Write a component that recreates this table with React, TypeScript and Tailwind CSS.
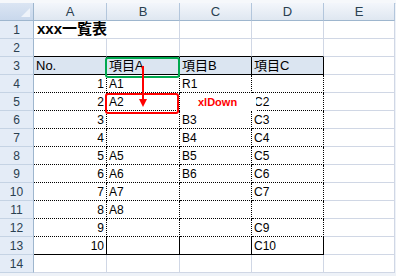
import React from "react";

const COLS = ["A", "B", "C", "D", "E"];

// Table body A3:D13
const TABLE: string[][] = [
  ["No.", "項目A", "項目B", "項目C"],
  ["1", "A1", "R1", ""],
  ["2", "A2", "", "C2"],
  ["3", "", "B3", "C3"],
  ["4", "", "B4", "C4"],
  ["5", "A5", "B5", "C5"],
  ["6", "A6", "B6", "C6"],
  ["7", "A7", "", "C7"],
  ["8", "A8", "", ""],
  ["9", "", "", "C9"],
  ["10", "", "", "C10"],
];

const font = { fontFamily: '"Liberation Sans", "Noto Sans CJK JP", sans-serif' };

function RowHead({ n }: { n: number }) {
  return (
    <div className="flex items-center justify-center border-r border-b border-r-[#9eb6ce] border-b-[#c5d3e4] bg-[#e4ecf7] text-[12px] text-[#2a4050]">
      {n}
    </div>
  );
}

function Plain({ cls = "" }: { cls?: string }) {
  return <div className={"border-r border-b border-[#d0d7e5] bg-white " + cls} />;
}

export default function App() {
  const cells: React.ReactNode[] = [];

  // header row
  cells.push(
    <div
      key="corner"
      className="relative border-r border-b border-[#9eb6ce] bg-[linear-gradient(#dbe5f3,#c9d8ec)]"
    >
      <div className="absolute right-[3px] bottom-[3px] h-0 w-0 border-l-[9px] border-t-[9px] border-l-transparent border-t-transparent border-b-[9px] border-b-[#eef3fa] border-r-0" />
    </div>
  );
  COLS.forEach((c) =>
    cells.push(
      <div
        key={"h" + c}
        className="flex items-center justify-center border-r border-b border-r-[#b3c6dc] border-b-[#9eb6ce] bg-[linear-gradient(#f3f6fb,#dfe7f1)] text-[13px] text-[#2a4050]"
      >
        {c}
      </div>
    )
  );

  // row 1: title
  cells.push(<RowHead key="r1" n={1} />);
  cells.push(
    <div
      key="title"
      className="col-span-2 flex items-end border-r border-b border-[#d0d7e5] bg-white pb-[1px] pl-[3px] text-[15px] font-bold leading-[16px] text-black"
    >
      xxx一覧表
    </div>
  );
  cells.push(<Plain key="c1" />, <Plain key="d1" />, <Plain key="e1" />);

  // row 2: bottom edge is the table's top border
  cells.push(<RowHead key="r2" n={2} />);
  ["a", "b", "c", "d"].forEach((k) =>
    cells.push(<div key={k + "2"} className="border-r border-r-[#d0d7e5] border-b border-b-black bg-white" />)
  );
  cells.push(<Plain key="e2" />);

  TABLE.forEach((row, i) => {
    const r = i + 3;
    const head = r === 3;
    const last = r === 13;
    cells.push(<RowHead key={"r" + r} n={r} />);
    row.forEach((v, j) => {
      const bottom = head || last ? "border-b border-solid border-b-black" : "border-b border-dotted border-b-black";
      const bg = head ? "bg-[#dbe5f1] text-[13px]" : "bg-white text-[12px]";
      const align = j === 0 && !head ? "justify-end pr-[2px]" : "justify-start pl-[2px]";
      cells.push(
        <div
          key={r + "-" + j}
          className={`flex items-end border-r border-r-black ${bottom} ${bg} ${align} pb-[1px] leading-[14px] text-black`}
        >
          {v}
        </div>
      );
    });
    cells.push(<Plain key={"e" + r} />);
  });

  // row 14
  cells.push(<RowHead key="r14" n={14} />);
  ["a", "b", "c", "d", "e"].forEach((k) => cells.push(<Plain key={k + "14"} />));

  return (
    <div className="relative h-[276px] w-[396px] overflow-hidden bg-[#eef2f8]" style={font}>
      <div className="h-[4px] border-b border-[#dfe6f0] bg-[#f6f8fb]" />
      <div className="grid grid-cols-[34px_73px_73px_72px_72px_71px] grid-rows-[18px_repeat(14,18px)] -mt-[1px]">
        {cells}
      </div>

      {/* text box with the direction label */}
      <div className="absolute left-[180px] top-[93px] flex h-[18px] w-[76px] items-center bg-white pl-[18px] text-[11px] font-bold text-[#ff0000]">
        xlDown
      </div>

      {/* start cell highlight */}
      <div className="absolute left-[105px] top-[57px] h-[21px] w-[75px] rounded-[3px] border-2 border-[#00a84f]" />
      {/* end cell highlight */}
      <div className="absolute left-[105px] top-[93px] h-[21px] w-[74px] rounded-[3px] border-2 border-[#ff0000]" />

      {/* arrow from header down to the end cell */}
      <svg className="absolute left-[136px] top-[64px]" width="14" height="46" viewBox="0 0 14 46">
        <line x1="7" y1="2" x2="7" y2="36" stroke="#ff0000" strokeWidth="2" />
        <polygon points="3,35 11,35 7,43" fill="#ff0000" />
      </svg>
    </div>
  );
}
